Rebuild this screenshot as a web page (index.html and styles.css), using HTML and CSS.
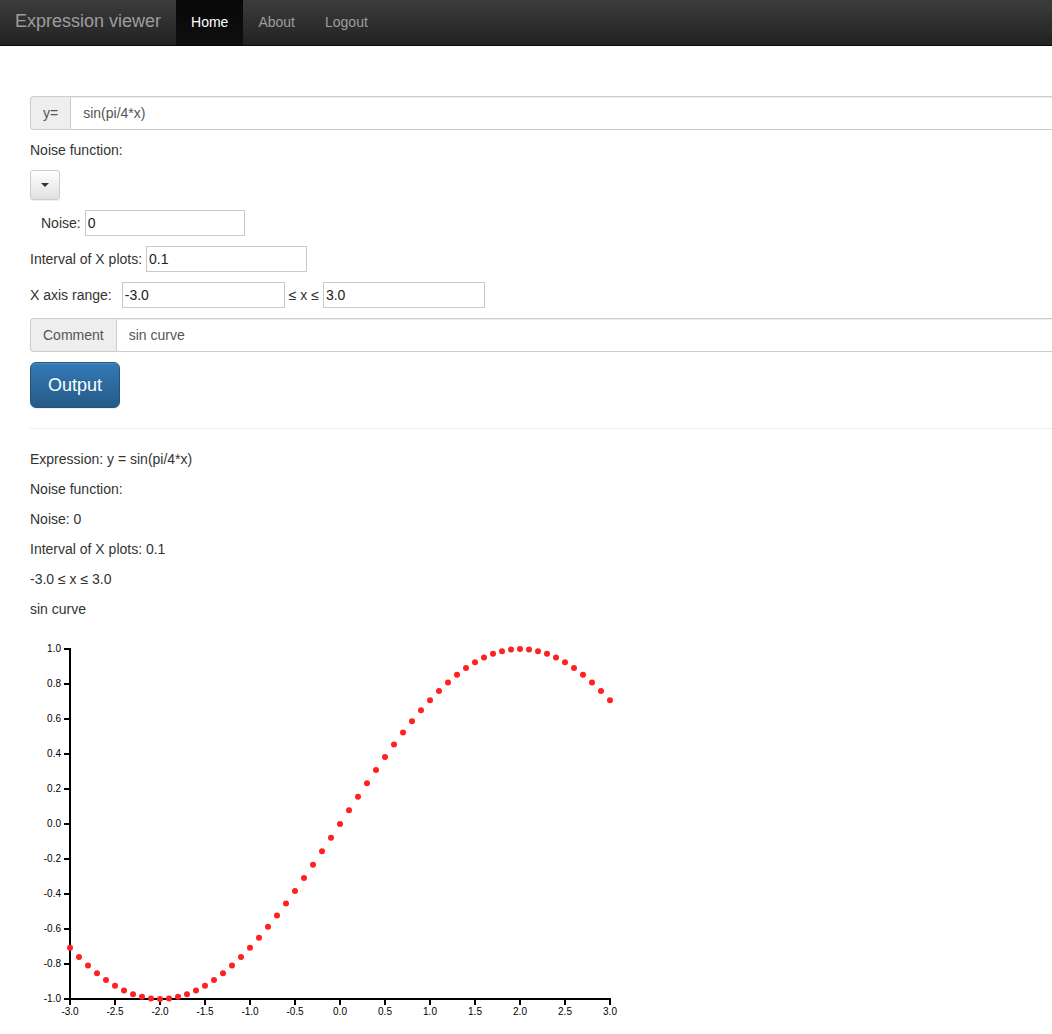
FILE: index.html
```html
<!DOCTYPE html>
<html lang="en">
<head>
<meta charset="utf-8">
<title>Expression viewer</title>
<link rel="stylesheet" href="styles.css">
</head>
<body>
<nav class="navbar">
  <a class="brand" href="#">Expression viewer</a>
  <ul class="nav">
    <li class="active"><a href="#">Home</a></li>
    <li><a href="#">About</a></li>
    <li><a href="#">Logout</a></li>
  </ul>
</nav>
<main class="container">
  <form class="form">
    <div class="input-group">
      <span class="addon">y=</span>
      <input class="group-input" type="text" value="sin(pi/4*x)">
    </div>
    <p class="line">Noise function:</p>
    <div class="row-btn">
      <button type="button" class="btn-dropdown"><span class="caret"></span></button>
    </div>
    <div class="row">
      <label class="lbl lbl-indent">Noise:</label>
      <input class="field" type="text" value="0">
    </div>
    <div class="row">
      <label class="lbl">Interval of X plots:</label>
      <input class="field field-161" type="text" value="0.1">
    </div>
    <div class="row">
      <label class="lbl lbl-range">X axis range:</label>
      <input class="field field-163" type="text" value="-3.0">
      <span class="lbl lbl-mid">≤ x ≤</span>
      <input class="field field-162" type="text" value="3.0">
    </div>
    <div class="input-group">
      <span class="addon">Comment</span>
      <input class="group-input" type="text" value="sin curve">
    </div>
    <button type="button" class="btn-primary">Output</button>
  </form>
  <hr class="divider">
  <p class="line">Expression: y = sin(pi/4*x)</p>
  <p class="line">Noise function:</p>
  <p class="line">Noise: 0</p>
  <p class="line">Interval of X plots: 0.1</p>
  <p class="line">-3.0 ≤ x ≤ 3.0</p>
  <p class="line">sin curve</p>
  <svg class="chart" width="600" height="400" viewBox="0 0 600 400">
    <g transform="translate(40,20)">
      <g class="axis y-axis">
        <path class="domain" d="M-6,0H0V350H-6"></path>
        <g transform="translate(0,0)"><line x2="-6"></line><text x="-9" dy=".32em">1.0</text></g>
        <g transform="translate(0,35)"><line x2="-6"></line><text x="-9" dy=".32em">0.8</text></g>
        <g transform="translate(0,70)"><line x2="-6"></line><text x="-9" dy=".32em">0.6</text></g>
        <g transform="translate(0,105)"><line x2="-6"></line><text x="-9" dy=".32em">0.4</text></g>
        <g transform="translate(0,140)"><line x2="-6"></line><text x="-9" dy=".32em">0.2</text></g>
        <g transform="translate(0,175)"><line x2="-6"></line><text x="-9" dy=".32em">0.0</text></g>
        <g transform="translate(0,210)"><line x2="-6"></line><text x="-9" dy=".32em">-0.2</text></g>
        <g transform="translate(0,245)"><line x2="-6"></line><text x="-9" dy=".32em">-0.4</text></g>
        <g transform="translate(0,280)"><line x2="-6"></line><text x="-9" dy=".32em">-0.6</text></g>
        <g transform="translate(0,315)"><line x2="-6"></line><text x="-9" dy=".32em">-0.8</text></g>
        <g transform="translate(0,350)"><line x2="-6"></line><text x="-9" dy=".32em">-1.0</text></g>
      </g>
      <g class="axis x-axis" transform="translate(0,350)">
        <path class="domain" d="M0,6V0H540V6"></path>
        <g transform="translate(0,0)"><line y2="6"></line><text y="9" dy=".71em">-3.0</text></g>
        <g transform="translate(45,0)"><line y2="6"></line><text y="9" dy=".71em">-2.5</text></g>
        <g transform="translate(90,0)"><line y2="6"></line><text y="9" dy=".71em">-2.0</text></g>
        <g transform="translate(135,0)"><line y2="6"></line><text y="9" dy=".71em">-1.5</text></g>
        <g transform="translate(180,0)"><line y2="6"></line><text y="9" dy=".71em">-1.0</text></g>
        <g transform="translate(225,0)"><line y2="6"></line><text y="9" dy=".71em">-0.5</text></g>
        <g transform="translate(270,0)"><line y2="6"></line><text y="9" dy=".71em">0.0</text></g>
        <g transform="translate(315,0)"><line y2="6"></line><text y="9" dy=".71em">0.5</text></g>
        <g transform="translate(360,0)"><line y2="6"></line><text y="9" dy=".71em">1.0</text></g>
        <g transform="translate(405,0)"><line y2="6"></line><text y="9" dy=".71em">1.5</text></g>
        <g transform="translate(450,0)"><line y2="6"></line><text y="9" dy=".71em">2.0</text></g>
        <g transform="translate(495,0)"><line y2="6"></line><text y="9" dy=".71em">2.5</text></g>
        <g transform="translate(540,0)"><line y2="6"></line><text y="9" dy=".71em">3.0</text></g>
      </g>
      <g class="dots">
        <circle cx="0" cy="298.74" r="3"></circle>
        <circle cx="9" cy="308.07" r="3"></circle>
        <circle cx="18" cy="316.58" r="3"></circle>
        <circle cx="27" cy="324.21" r="3"></circle>
        <circle cx="36" cy="330.93" r="3"></circle>
        <circle cx="45" cy="336.68" r="3"></circle>
        <circle cx="54" cy="341.44" r="3"></circle>
        <circle cx="63" cy="345.16" r="3"></circle>
        <circle cx="72" cy="347.85" r="3"></circle>
        <circle cx="81" cy="349.46" r="3"></circle>
        <circle cx="90" cy="350" r="3"></circle>
        <circle cx="99" cy="349.46" r="3"></circle>
        <circle cx="108" cy="347.85" r="3"></circle>
        <circle cx="117" cy="345.16" r="3"></circle>
        <circle cx="126" cy="341.44" r="3"></circle>
        <circle cx="135" cy="336.68" r="3"></circle>
        <circle cx="144" cy="330.93" r="3"></circle>
        <circle cx="153" cy="324.21" r="3"></circle>
        <circle cx="162" cy="316.58" r="3"></circle>
        <circle cx="171" cy="308.07" r="3"></circle>
        <circle cx="180" cy="298.74" r="3"></circle>
        <circle cx="189" cy="288.65" r="3"></circle>
        <circle cx="198" cy="277.86" r="3"></circle>
        <circle cx="207" cy="266.44" r="3"></circle>
        <circle cx="216" cy="254.45" r="3"></circle>
        <circle cx="225" cy="241.97" r="3"></circle>
        <circle cx="234" cy="229.08" r="3"></circle>
        <circle cx="243" cy="215.85" r="3"></circle>
        <circle cx="252" cy="202.37" r="3"></circle>
        <circle cx="261" cy="188.73" r="3"></circle>
        <circle cx="270" cy="175" r="3"></circle>
        <circle cx="279" cy="161.27" r="3"></circle>
        <circle cx="288" cy="147.63" r="3"></circle>
        <circle cx="297" cy="134.15" r="3"></circle>
        <circle cx="306" cy="120.92" r="3"></circle>
        <circle cx="315" cy="108.03" r="3"></circle>
        <circle cx="324" cy="95.55" r="3"></circle>
        <circle cx="333" cy="83.56" r="3"></circle>
        <circle cx="342" cy="72.14" r="3"></circle>
        <circle cx="351" cy="61.35" r="3"></circle>
        <circle cx="360" cy="51.26" r="3"></circle>
        <circle cx="369" cy="41.93" r="3"></circle>
        <circle cx="378" cy="33.42" r="3"></circle>
        <circle cx="387" cy="25.79" r="3"></circle>
        <circle cx="396" cy="19.07" r="3"></circle>
        <circle cx="405" cy="13.32" r="3"></circle>
        <circle cx="414" cy="8.56" r="3"></circle>
        <circle cx="423" cy="4.84" r="3"></circle>
        <circle cx="432" cy="2.15" r="3"></circle>
        <circle cx="441" cy="0.54" r="3"></circle>
        <circle cx="450" cy="0" r="3"></circle>
        <circle cx="459" cy="0.54" r="3"></circle>
        <circle cx="468" cy="2.15" r="3"></circle>
        <circle cx="477" cy="4.84" r="3"></circle>
        <circle cx="486" cy="8.56" r="3"></circle>
        <circle cx="495" cy="13.32" r="3"></circle>
        <circle cx="504" cy="19.07" r="3"></circle>
        <circle cx="513" cy="25.79" r="3"></circle>
        <circle cx="522" cy="33.42" r="3"></circle>
        <circle cx="531" cy="41.93" r="3"></circle>
        <circle cx="540" cy="51.26" r="3"></circle>
      </g>
    </g>
  </svg>
</main>
</body>
</html>
```

FILE: styles.css
```css
* { box-sizing: border-box; }

html, body {
  margin: 0;
  padding: 0;
  overflow: hidden;
}

body {
  font-family: "Liberation Sans", Arial, Helvetica, sans-serif;
  font-size: 14px;
  line-height: 20px;
  color: #333;
  background: #fff;
}

/* Navbar */
.navbar {
  display: flex;
  align-items: stretch;
  height: 46px;
  background: linear-gradient(to bottom, #3c3c3c 0%, #222 100%);
  border-bottom: 1px solid #080808;
}

.brand {
  display: block;
  padding: 11px 15px 0 15px;
  font-size: 18px;
  line-height: 20px;
  color: #9d9d9d;
  text-decoration: none;
}

.nav {
  display: flex;
  list-style: none;
  margin: 0;
  padding: 0;
}

.nav li a {
  display: block;
  height: 45px;
  padding: 12px 15px 0 15px;
  line-height: 20px;
  color: #9d9d9d;
  text-decoration: none;
}

.nav li.active a {
  background: linear-gradient(to bottom, #080808 0%, #0f0f0f 100%);
  color: #fff;
}

/* Container */
.container {
  width: 1170px;
  padding: 50px 15px 0 30px;
}

.form {
  display: block;
}

/* Input group */
.input-group {
  display: flex;
  height: 34px;
  margin-bottom: 10px;
}

.addon {
  display: flex;
  align-items: center;
  padding: 0 12px;
  font-size: 14px;
  color: #555;
  background: #eee;
  border: 1px solid #ccc;
  border-right: 0;
  border-radius: 4px 0 0 4px;
}

.group-input {
  flex: 1;
  height: 34px;
  padding: 6px 12px;
  font-family: inherit;
  font-size: 14px;
  color: #555;
  background: #fff;
  border: 1px solid #ccc;
  border-radius: 0 4px 4px 0;
  box-shadow: inset 0 1px 1px rgba(0, 0, 0, .075);
  outline: none;
}

.line {
  margin: 0 0 10px 0;
  line-height: 20px;
}

/* Dropdown button */
.row-btn {
  margin-bottom: 10px;
}

.btn-dropdown {
  display: flex;
  align-items: center;
  justify-content: center;
  width: 30px;
  height: 30px;
  padding: 0;
  background: linear-gradient(to bottom, #fff 0%, #e0e0e0 100%);
  border: 1px solid #ccc;
  border-radius: 3px;
  box-shadow: inset 0 1px 0 rgba(255, 255, 255, .15), 0 1px 1px rgba(0, 0, 0, .075);
}

.caret {
  display: block;
  width: 0;
  height: 0;
  border-top: 4px solid #333;
  border-left: 4px solid transparent;
  border-right: 4px solid transparent;
}

/* Plain rows */
.row {
  display: flex;
  align-items: center;
  height: 26px;
  margin-bottom: 10px;
}

.lbl {
  margin-right: 4px;
  white-space: nowrap;
}

.lbl-indent {
  margin-left: 11px;
}

.lbl-range {
  margin-right: 10px;
}

.lbl-mid {
  margin-left: 4px;
  margin-right: 4px;
}

.field {
  width: 160px;
  height: 26px;
  padding: 1px 2px;
  font-family: inherit;
  font-size: 14px;
  color: #222;
  background: #fff;
  border: 1px solid #c9c9c9;
  border-radius: 0;
  outline: none;
}

.field-161 { width: 161px; }
.field-162 { width: 162px; }
.field-163 { width: 163px; }

/* Primary button */
.btn-primary {
  display: block;
  width: 90px;
  height: 46px;
  padding: 10px 0;
  font-family: inherit;
  font-size: 18px;
  line-height: 24px;
  text-align: center;
  color: #fff;
  background: linear-gradient(to bottom, #337ab7 0%, #265a88 100%);
  border: 1px solid #245580;
  border-radius: 6px;
  text-shadow: 0 -1px 0 rgba(0, 0, 0, .2);
  box-shadow: inset 0 1px 0 rgba(255, 255, 255, .15), 0 1px 1px rgba(0, 0, 0, .075);
}

.divider {
  margin: 20px 0;
  border: 0;
  border-top: 1px solid #eee;
}

/* Chart */
.chart {
  display: block;
}

.axis .domain {
  fill: none;
  stroke: #000;
  stroke-width: 2px;
}

.axis line {
  stroke: #000;
  stroke-width: 2px;
}

.axis text {
  font-family: "Liberation Sans", Arial, sans-serif;
  font-size: 10px;
  fill: #000;
}

.y-axis text {
  text-anchor: end;
}

.x-axis text {
  text-anchor: middle;
}

.dots circle {
  fill: #ff2020;
}
```
